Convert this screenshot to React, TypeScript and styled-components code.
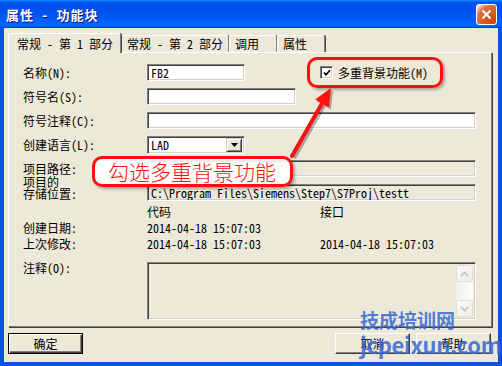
import React from "react";
import styled, { createGlobalStyle } from "styled-components";

const GlobalStyle = createGlobalStyle`
  html, body {
    margin: 0;
    padding: 0;
    background: #ffffff;
  }
  body {
    font-family: "Noto Sans Mono CJK SC", "Noto Sans CJK SC", monospace;
    font-size: 12px;
    color: #000;
  }
`;

const Window = styled.div`
  position: relative;
  width: 502px;
  height: 366px;
  display: flex;
  flex-direction: column;
  background: linear-gradient(to right, #0a53e0, #0058ee 50%, #0a53e0);
  overflow: hidden;
`;

const TitleBar = styled.div`
  height: 28px;
  flex: none;
  display: flex;
  align-items: center;
  justify-content: space-between;
  padding: 0 5px 0 6px;
  background: linear-gradient(
    180deg,
    #0997ff,
    #0053ee 8%,
    #0050ee 40%,
    #0066ff 88%,
    #0066ff 93%,
    #005bff 95%,
    #003dd7 96%,
    #003dd7
  );
`;

const Title = styled.span`
  color: #fff;
  font-family: "Noto Sans Mono CJK SC", "Noto Sans CJK SC", sans-serif;
  font-weight: 700;
  font-size: 13px;
  letter-spacing: 1px;
  white-space: pre;
  text-shadow: 1px 1px 0 #0f1089;
`;

const CloseButton = styled.div`
  width: 21px;
  height: 21px;
  box-sizing: border-box;
  border: 1px solid #fff;
  border-radius: 3px;
  display: flex;
  align-items: center;
  justify-content: center;
  background: radial-gradient(
    circle at 90% 90%,
    #cc4600 0%,
    #dc6527 55%,
    #cd7546 70%,
    #ffccb2 90%,
    #fff 100%
  );
`;

const Client = styled.div`
  flex: 1;
  margin: 0 4px 4px;
  background: #ece9d8;
  padding: 5px 6px 0 4px;
  display: flex;
  flex-direction: column;
`;

const TabStrip = styled.div`
  display: flex;
  align-items: flex-end;
  height: 20px;
  position: relative;
  z-index: 1;
  margin-bottom: -1px;
`;

const Tab = styled.div<{ $active?: boolean }>`
  box-sizing: border-box;
  height: ${(p) => (p.$active ? 20 : 17)}px;
  margin-bottom: ${(p) => (p.$active ? 0 : 1)}px;
  min-width: 48px;
  padding: ${(p) => (p.$active ? "0 7px 0 8px" : "0 5px")};
  line-height: ${(p) => (p.$active ? 19 : 16)}px;
  white-space: pre;
  background: #ece9d8;
  border-top: 1px solid #fff;
  border-left: 1px solid #fff;
  border-right: 1px solid #808080;
  border-radius: 2px 2px 0 0;
  box-shadow: 1px 0 0 #404040;
  position: relative;
  z-index: ${(p) => (p.$active ? 2 : 1)};
`;

const Panel = styled.div`
  border: 1px solid;
  border-color: #fff #808080 #808080 #fff;
  box-shadow: 1px 1px 0 #404040;
  padding: 11px 15px 6px 14px;
`;

const Form = styled.div`
  display: grid;
  grid-template-columns: 124px 173px 156px;
  grid-template-rows: 24px 24px 24px 24px 24px 20px 16px 16px 26px 58px;
  align-items: start;
`;

const Label = styled.div<{ $tight?: boolean }>`
  line-height: ${(p) => (p.$tight ? 12 : 15)}px;
  padding-top: ${(p) => (p.$tight ? 0 : 1)}px;
  white-space: pre;
`;

const StackedLabel = styled.div`
  height: 17px;
  display: flex;
  flex-direction: column;
  justify-content: flex-end;
  padding-bottom: 1px;
  box-sizing: border-box;
  line-height: 12px;
  white-space: pre;
`;

const Value = styled.div`
  line-height: 16px;
  white-space: pre;
`;

const Sunken = styled.div<{ $width?: number; $wide?: boolean; $readonly?: boolean }>`
  box-sizing: border-box;
  height: 17px;
  width: ${(p) => (p.$width ? `${p.$width}px` : "auto")};
  grid-column: ${(p) => (p.$wide ? "2 / span 2" : "auto")};
  border: 1px solid;
  border-color: #808080 #fff #fff #808080;
  box-shadow: inset 1px 1px 0 #404040, inset -1px -1px 0 #d4d0c8;
  background: ${(p) => (p.$readonly ? "#ece9d8" : "#fff")};
  padding: 0 3px;
  line-height: 15px;
  white-space: pre;
  overflow: hidden;
`;

const Combo = styled(Sunken)`
  height: 18px;
  display: flex;
  justify-content: space-between;
  padding: 0 2px 0 3px;
  line-height: 16px;
`;

const DropButton = styled.div`
  width: 16px;
  height: 14px;
  margin-top: 1px;
  box-sizing: border-box;
  background: #ece9d8;
  border: 1px solid;
  border-color: #d4d0c8 #404040 #404040 #d4d0c8;
  box-shadow: inset 1px 1px 0 #fff, inset -1px -1px 0 #808080;
  display: flex;
  align-items: center;
  justify-content: center;
`;

const CheckRow = styled.div`
  display: flex;
  align-items: center;
  gap: 5px;
  height: 17px;
  white-space: pre;
`;

const CheckBox = styled.div`
  width: 13px;
  height: 13px;
  box-sizing: border-box;
  border: 1px solid;
  border-color: #808080 #fff #fff #808080;
  box-shadow: inset 1px 1px 0 #404040, inset -1px -1px 0 #d4d0c8;
  background: #fff;
  display: flex;
  align-items: center;
  justify-content: center;
`;

const CommentBox = styled(Sunken)`
  height: 58px;
  padding: 2px;
  display: flex;
  justify-content: flex-end;
`;

const ScrollBar = styled.div`
  width: 17px;
  display: flex;
  flex-direction: column;
  justify-content: space-between;
  background: linear-gradient(to right, #f0efe8, #fdfdfb);
`;

const ScrollButton = styled.div`
  width: 17px;
  height: 17px;
  box-sizing: border-box;
  border: 1px solid #e2e0d6;
  border-radius: 2px;
  background: linear-gradient(135deg, #fbfbf8, #ecebe4);
  display: flex;
  align-items: center;
  justify-content: center;
`;

const ButtonRow = styled.div`
  display: flex;
  justify-content: space-between;
  margin-top: 6px;
  padding-right: 1px;
`;

const ButtonGroup = styled.div`
  display: flex;
  gap: 6px;
`;

const Button = styled.div<{ $default?: boolean }>`
  width: 75px;
  height: 21px;
  box-sizing: border-box;
  display: flex;
  align-items: center;
  justify-content: center;
  background: #ece9d8;
  border: 1px solid;
  border-color: ${(p) =>
    p.$default ? "#000" : "#fff #404040 #404040 #fff"};
  box-shadow: ${(p) =>
    p.$default
      ? "inset 1px 1px 0 #fff, inset -1px -1px 0 #404040, inset -2px -2px 0 #808080"
      : "inset -1px -1px 0 #808080"};
`;

const Callout = styled.div<{ $filled?: boolean }>`
  position: absolute;
  box-sizing: border-box;
  border: 3px solid #ff1010;
  border-radius: 10px;
  background: ${(p) => (p.$filled ? "rgba(255, 255, 255, 0.9)" : "transparent")};
  box-shadow: 2px 2px 3px rgba(0, 0, 0, 0.3);
`;

const CalloutText = styled.div`
  font-family: "Noto Sans CJK SC", sans-serif;
  font-size: 21px;
  font-weight: 300;
  line-height: 25px;
  color: #ff1010;
  padding-left: 13px;
  white-space: pre;
`;

const ArrowLayer = styled.svg`
  position: absolute;
  left: 0;
  top: 0;
  pointer-events: none;
`;

const Watermark = styled.div`
  position: absolute;
  left: 360px;
  top: 308px;
  color: rgba(52, 104, 218, 0.85);
  font-family: "Noto Sans CJK SC", sans-serif;
  font-weight: 700;
  pointer-events: none;
`;

const WatermarkName = styled.div`
  font-size: 19px;
  line-height: 24px;
`;

const WatermarkSite = styled.div`
  font-size: 22px;
  line-height: 24px;
  letter-spacing: -0.3px;
`;

const Chevron = ({ up }: { up?: boolean }) => (
  <svg width="9" height="6" viewBox="0 0 9 6">
    <path
      d={up ? "M1 5 L4.5 1.5 L8 5" : "M1 1 L4.5 4.5 L8 1"}
      fill="none"
      stroke="#c5c3b8"
      strokeWidth="1.6"
    />
  </svg>
);

export default function App() {
  return (
    <>
      <GlobalStyle />
      <Window>
        <TitleBar>
          <Title>属性 - 功能块</Title>
          <CloseButton>
            <svg width="11" height="11" viewBox="0 0 11 11">
              <path d="M1.5 1.5 L9.5 9.5 M9.5 1.5 L1.5 9.5" stroke="#fff" strokeWidth="2" />
            </svg>
          </CloseButton>
        </TitleBar>
        <Client>
          <TabStrip>
            <Tab $active>常规 - 第 1 部分</Tab>
            <Tab>常规 - 第 2 部分</Tab>
            <Tab>调用</Tab>
            <Tab>属性</Tab>
          </TabStrip>
          <Panel>
            <Form>
              <Label>名称(N):</Label>
              <Sunken $width={98}>FB2</Sunken>
              <CheckRow>
                <CheckBox>
                  <svg width="8" height="8" viewBox="0 0 8 8">
                    <path d="M1 3.5 L3 5.8 L7 1.2" fill="none" stroke="#000" strokeWidth="1.7" />
                  </svg>
                </CheckBox>
                多重背景功能(M)
              </CheckRow>

              <Label>符号名(S):</Label>
              <Sunken $width={149} />
              <div />

              <Label>符号注释(C):</Label>
              <Sunken $wide />

              <Label>创建语言(L):</Label>
              <Combo $width={98}>
                LAD
                <DropButton>
                  <svg width="7" height="4" viewBox="0 0 7 4">
                    <path d="M0 0 H7 L3.5 4 Z" fill="#000" />
                  </svg>
                </DropButton>
              </Combo>
              <div />

              <Label>项目路径:</Label>
              <Sunken $wide $readonly />

              <StackedLabel>
                <span>项目的</span>
                <span>存储位置:</span>
              </StackedLabel>
              <Sunken $wide $readonly>
                C:\Program Files\Siemens\Step7\S7Proj\testt
              </Sunken>

              <div />
              <Value>代码</Value>
              <Value>接口</Value>

              <Value>创建日期:</Value>
              <Value>2014-04-18 15:07:03</Value>
              <div />

              <Value>上次修改:</Value>
              <Value>2014-04-18 15:07:03</Value>
              <Value>2014-04-18 15:07:03</Value>

              <Label $tight>注释(O):</Label>
              <CommentBox $wide $readonly>
                <ScrollBar>
                  <ScrollButton>
                    <Chevron up />
                  </ScrollButton>
                  <ScrollButton>
                    <Chevron />
                  </ScrollButton>
                </ScrollBar>
              </CommentBox>
            </Form>
          </Panel>
          <ButtonRow>
            <Button $default>确定</Button>
            <ButtonGroup>
              <Button>取消</Button>
              <Button>帮助</Button>
            </ButtonGroup>
          </ButtonRow>
        </Client>

        <Callout style={{ left: 307, top: 57, width: 136, height: 31 }} />
        <Callout $filled style={{ left: 92, top: 156, width: 201, height: 31 }}>
          <CalloutText>勾选多重背景功能</CalloutText>
        </Callout>
        <ArrowLayer width="502" height="366" viewBox="0 0 502 366">
          <g transform="translate(2 2)" opacity="0.3">
            <path d="M292 156 L324 100" stroke="#000" strokeWidth="4" />
            <path d="M331 88 L328.9 107.6 L315.1 99.6 Z" fill="#000" />
          </g>
          <path d="M292 156 L324 100" stroke="#ff1010" strokeWidth="4" strokeLinecap="round" />
          <path d="M331 88 L328.9 107.6 L315.1 99.6 Z" fill="#ff1010" />
        </ArrowLayer>

        <Watermark>
          <WatermarkName>技成培训网</WatermarkName>
          <WatermarkSite>jcpeixun.com</WatermarkSite>
        </Watermark>
      </Window>
    </>
  );
}
